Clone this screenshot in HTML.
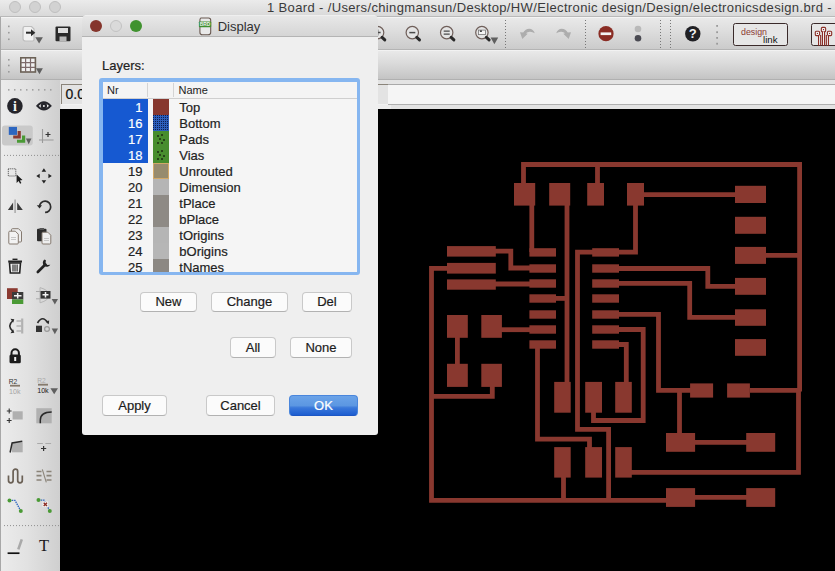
<!DOCTYPE html>
<html><head><meta charset="utf-8">
<style>
*{box-sizing:border-box;margin:0;padding:0}
html,body{width:835px;height:571px;overflow:hidden;background:#000;font-family:"Liberation Sans",sans-serif;}
#root{position:relative;width:835px;height:571px;overflow:hidden;background:#000}
.abs{position:absolute}
#titlebar{left:0;top:0;width:835px;height:17px;background:linear-gradient(#ebebeb,#d9d9d9);border-bottom:1px solid #b9b9b9}
#titletext{left:267px;top:-1px;letter-spacing:0.36px;font-size:13px;line-height:17px;color:#3a3a3a;white-space:nowrap;transform-origin:0 0}
.tl{position:absolute;width:12px;height:12px;border-radius:50%}
#tb1{left:0;top:17px;width:835px;height:33px;background:linear-gradient(#e9e9e9 0%,#dedede 40%,#cbcbcb 100%);border-top:1px solid #f4f4f4;border-bottom:1px solid #b4b4b4}
#tb2{left:0;top:50px;width:835px;height:30px;background:linear-gradient(#e9e9e9 0%,#dadada 45%,#c4c4c4 100%);border-top:1px solid #f2f2f2;border-bottom:1px solid #b0b0b0}
#row3{left:0;top:80px;width:835px;height:29px;background:#e3e3e3}
#coord{left:61px;top:84px;width:330px;height:19.500px;background:#e3e3e3;border-top:1px solid #8a847a;border-left:1px solid #8a847a;box-shadow:0 1px 0 #f2f2f2,0 5px 0 #ededed;font-size:14px;line-height:18.400px;padding-left:3.500px;color:#111;-webkit-text-stroke:0.2px #111}
#cmd{left:388px;top:84px;width:447px;height:21px;background:#f5f5f5;border-top:1px solid #a9a9a9;border-bottom:1px solid #b0b0b0}
#left{left:0;top:80px;width:60px;height:491px;background:linear-gradient(90deg,#ececec 0%,#e2e2e2 45%,#cfcfcf 100%)}
#leftedge{left:0;top:17px;width:1px;height:554px;background:#a8a8a8}
.pcb{position:absolute;left:0;top:0}
.icons{position:absolute;left:0;top:0}
/* dialog */
#dlg{left:82px;top:15px;width:296px;height:420px;background:#efefef;border-radius:5px 5px 3px 3px;overflow:hidden}
#dlgtitle{left:0;top:0;width:296px;height:22px;background:linear-gradient(#f3f3f3 0,#e7e7e7 1.500px,#d5d5d5 100%);border-bottom:1px solid #b4b4b4}
#dlgtitle span{position:absolute;left:135.7px;top:3.8px;font-size:13px;line-height:16px;color:#303030}
#lbl{left:20px;top:43px;font-size:13px;line-height:16px;color:#222}
#listring{left:17px;top:63px;width:261px;height:197px;background:#86b6f0;border-radius:3px}
#list{left:3.5px;top:3.5px;width:254px;height:190px;background:#f5f5f5;overflow:hidden}
#lhead{left:0;top:0;width:254px;height:17px;background:#f4f4f4;border-bottom:1px solid #cfcfcf;font-size:11px;line-height:15px;color:#222}
#lhead i{position:absolute;top:1px;width:1px;height:14px;background:#d4d4d4}
.row{position:absolute;left:0;width:254px;height:16px;font-size:13px;line-height:17.4px;color:#222}
.row .nr{position:absolute;left:0;top:0;width:45px;height:16px;text-align:right;padding-right:5px}
.row.sel .nr{background:#1659d1;color:#fff}
.row .sw{position:absolute;left:50px;top:0;width:16px;height:16px}
.row .nm{position:absolute;left:76.8px;top:0}
.row,.btn,#lbl{-webkit-text-stroke:0.2px currentColor}
.btn{position:absolute;height:20px;background:#fbfbfb;border:1px solid #c9c9c9;border-bottom-color:#b2b2b2;border-radius:4px;font-size:13px;line-height:18px;text-align:center;color:#1c1c1c}
.btn.ok{background:linear-gradient(#6ba3e8 0%,#5c97e2 50%,#3a78da 62%,#1d5dd0 100%);border-color:#4a86dc;border-bottom-color:#1c56c4;color:#fff}
</style></head><body><div id="root">
<div id="titlebar" class="abs"></div>
<div class="tl" style="left:9px;top:1px;background:#d2d2d2;border:1px solid #bfbfbf"></div>
<div class="tl" style="left:29px;top:1px;background:#d2d2d2;border:1px solid #bfbfbf"></div>
<div class="tl" style="left:49px;top:1px;background:#d2d2d2;border:1px solid #bfbfbf"></div>
<div id="titletext" class="abs">1 Board - /Users/chingmansun/Desktop/HW/Electronic design/Design/electronicsdesign.brd -</div>
<div id="tb1" class="abs"></div>
<div id="tb2" class="abs"></div>
<div id="row3" class="abs"></div>
<div id="left" class="abs"></div>
<div id="leftedge" class="abs"></div>
<div id="coord" class="abs">0.05 inch</div>
<div id="cmd" class="abs"></div>
<div class="abs" style="left:60px;top:109px;width:775px;height:462px;background:#000"></div>
<svg class="pcb" width="835" height="571" viewBox="0 0 835 571"><g fill="#89382f"><rect x="514.0" y="183.0" width="21.2" height="22.6"/><rect x="549.2" y="183.0" width="21.0" height="22.6"/><rect x="587.2" y="183.0" width="16.8" height="22.6"/><rect x="627.0" y="183.0" width="17.0" height="22.6"/><rect x="735.0" y="185.8" width="31.0" height="17.2"/><rect x="735.0" y="216.8" width="31.0" height="17.0"/><rect x="735.0" y="246.9" width="31.0" height="17.0"/><rect x="735.0" y="277.9" width="31.0" height="16.9"/><rect x="735.0" y="309.3" width="31.0" height="16.5"/><rect x="735.0" y="339.1" width="31.0" height="16.7"/><rect x="447.0" y="246.1" width="48.8" height="10.5"/><rect x="447.0" y="262.9" width="48.8" height="10.7"/><rect x="447.0" y="279.4" width="48.8" height="10.3"/><rect x="529.4" y="248.2" width="26.6" height="8.4"/><rect x="592.2" y="248.2" width="26.8" height="8.4"/><rect x="529.4" y="264.3" width="26.6" height="8.4"/><rect x="592.2" y="264.3" width="26.8" height="8.4"/><rect x="529.4" y="279.3" width="26.6" height="8.4"/><rect x="592.2" y="279.3" width="26.8" height="8.4"/><rect x="529.4" y="294.3" width="26.6" height="8.4"/><rect x="592.2" y="294.3" width="26.8" height="8.4"/><rect x="529.4" y="310.3" width="26.6" height="8.4"/><rect x="592.2" y="310.3" width="26.8" height="8.4"/><rect x="529.4" y="325.3" width="26.6" height="8.4"/><rect x="592.2" y="325.3" width="26.8" height="8.4"/><rect x="529.4" y="340.3" width="26.6" height="8.4"/><rect x="592.2" y="340.3" width="26.8" height="8.4"/><rect x="447.0" y="315.0" width="20.8" height="22.8"/><rect x="447.0" y="363.8" width="20.8" height="23.1"/><rect x="481.3" y="315.0" width="20.6" height="22.8"/><rect x="481.3" y="363.8" width="20.6" height="23.1"/><rect x="554.2" y="381.9" width="16.5" height="30.8"/><rect x="554.2" y="447.1" width="16.5" height="30.5"/><rect x="585.2" y="381.9" width="16.8" height="30.8"/><rect x="585.2" y="447.1" width="16.8" height="30.5"/><rect x="615.2" y="381.9" width="16.6" height="30.8"/><rect x="615.2" y="447.1" width="16.6" height="30.5"/><rect x="690.1" y="383.4" width="23.0" height="14.2"/><rect x="727.1" y="383.4" width="22.8" height="14.2"/><rect x="666.0" y="433.0" width="29.1" height="18.8"/><rect x="666.0" y="488.1" width="29.1" height="18.8"/><rect x="746.2" y="433.0" width="29.0" height="18.8"/><rect x="746.2" y="488.1" width="29.0" height="18.8"/></g><g fill="none" stroke="#89382f" stroke-width="4.8" stroke-linejoin="miter" stroke-linecap="butt"><path d="M523.5 184 V164.5 H799.6 V391.5"/><path d="M798.5 389 V472.4 H631"/><path d="M597.5 164.5 V184"/><path d="M766 255.3 H799.6"/><path d="M750 390.3 H798.5"/><path d="M531.8 205 V252"/><path d="M567 205 V383"/><path d="M556 298.4 H567"/><path d="M644 194.6 H735"/><path d="M635.5 205 V252.1 H619"/><path d="M593 252.1 H577.5 V429.4 H608.6 V500"/><path d="M619 268.5 H707.8 V286.3 H735"/><path d="M619 283.3 H689.7 V317.3 H735"/><path d="M619 314.3 H658.5 V390.3 H691"/><path d="M679.5 390.3 V434"/><path d="M619 329.5 H643.2 V420.5 H593.5 V412"/><path d="M619 344.5 H626.3 V383"/><path d="M495 251.2 H510.8 V268 H530"/><path d="M448 268.4 H431.5 V500.3 H667"/><path d="M495 284 H530"/><path d="M457.4 337 V365"/><path d="M501 329.7 H530"/><path d="M492.3 386 V396.3 H431.5"/><path d="M537.5 348 V439.2 H589.5 V448"/><path d="M563.5 477 V500.3"/><path d="M695 442.3 H747"/><path d="M695 497.3 H747"/></g></svg>
<svg class="icons" width="835" height="571" viewBox="0 0 835 571"><rect x="8.0" y="25.6" width="1.6" height="1.6" fill="#9b9b9b"/><rect x="8.0" y="31.9" width="1.6" height="1.6" fill="#9b9b9b"/><rect x="8.0" y="38.5" width="1.6" height="1.6" fill="#9b9b9b"/><path d="M24.5 26.5h7l2.5 2.5v10.5q0 1.5-1.5 1.5h-7q-2.5 0-2.5-2.5v-9.5q0-2.5 1.5-2.5z" fill="#f1f1f1" stroke="#bdbdbd" stroke-width="1.2"/><path d="M26 32.7h6" stroke="#2a2a2a" stroke-width="2" fill="none"/><path d="M31 29.2l4.3 3.5-4.3 3.5z" fill="#2a2a2a"/><path d="M35.3 37.3H42.9L39.099999999999994 43.6Z" fill="#5f5f5f"/><path d="M56.5 26.5h13q1 0 1 1v12.8q0 1-1 1h-13q-1 0-1-1v-12.8q0-1 1-1z" fill="#2a2a2a"/><rect x="58" y="28" width="10" height="5" fill="#dedede"/><rect x="59.5" y="36.5" width="7" height="4.8" fill="#b9b9b9"/><circle cx="377.6" cy="32.6" r="6.2" fill="#e4e4e4" stroke="#6f5f5a" stroke-width="1.2"/><path d="M382.1 37.300000000000004l2.7 2.6" stroke="#2a2a2a" stroke-width="3" stroke-linecap="round"/><path d="M374.6 32.6h6M377.6 29.6v6" stroke="#4a4a4a" stroke-width="1.5"/><circle cx="412.3" cy="32.6" r="6.2" fill="#e4e4e4" stroke="#6f5f5a" stroke-width="1.2"/><path d="M416.8 37.300000000000004l2.7 2.6" stroke="#2a2a2a" stroke-width="3" stroke-linecap="round"/><path d="M409.3 32.6h6" stroke="#4a4a4a" stroke-width="1.5"/><circle cx="446.7" cy="32.6" r="6.2" fill="#e4e4e4" stroke="#6f5f5a" stroke-width="1.2"/><path d="M451.2 37.300000000000004l2.7 2.6" stroke="#2a2a2a" stroke-width="3" stroke-linecap="round"/><path d="M443.7 31.1h6M443.7 34.1h6" stroke="#4a4a4a" stroke-width="1.4"/><circle cx="481.9" cy="32.6" r="6.2" fill="#e4e4e4" stroke="#6f5f5a" stroke-width="1.2"/><path d="M486.4 37.300000000000004l2.7 2.6" stroke="#2a2a2a" stroke-width="3" stroke-linecap="round"/><rect x="478.4" y="30.1" width="7" height="4.5" fill="#f4f4f4" stroke="#777" stroke-width="0.8"/><rect x="479.9" y="30.400000000000002" width="2" height="1.5" fill="#333"/><path d="M490.6 37.5H498.2L494.4 44.2Z" fill="#5f5f5f"/><path d="M505.5 20V48.5" stroke="#777" stroke-width="1" stroke-dasharray="1 2" fill="none"/><path d="M534.8 33.2q-1.600-4.200-5.600-4.400q-3.800 0-6 3.800l-3.200-.4 2.300 6.700 5.400-5.200-1.800-.5q1.800-1.700 4.200-1.500q2.400.2 4.700 1.500z" fill="#adadad"/><path d="M534.8 33.2q-1.600-4.200-5.600-4.400q-3.800 0-6 3.800l-3.200-.4 2.300 6.700 5.400-5.200-1.800-.5q1.800-1.700 4.200-1.500q2.400.2 4.700 1.500z" fill="#adadad" transform="translate(1091 0) scale(-1 1)"/><path d="M585.5 20V48.5" stroke="#777" stroke-width="1" stroke-dasharray="1 2" fill="none"/><circle cx="606" cy="33.7" r="7.6" fill="#8a2d24"/><rect x="600.6" y="32.4" width="10.6" height="2.7" fill="#f4f4f4"/><circle cx="638" cy="29" r="3.3" fill="#b9b9b9"/><circle cx="638" cy="38.3" r="3.3" fill="#4a4a52"/><path d="M660.5 20V48.5" stroke="#777" stroke-width="1" stroke-dasharray="1 2" fill="none"/><path d="M670.5 20V48.5" stroke="#777" stroke-width="1" stroke-dasharray="1 2" fill="none"/><circle cx="692.8" cy="33.7" r="7.7" fill="#202024"/><text x="692.8" y="38.4" font-family="Liberation Sans" font-weight="bold" font-size="13" text-anchor="middle" fill="#f2f2f2">?</text><rect x="716.2" y="25.0" width="1.8" height="1.8" fill="#9a9a9a"/><rect x="716.2" y="31.3" width="1.8" height="1.8" fill="#9a9a9a"/><rect x="716.2" y="37.0" width="1.8" height="1.8" fill="#9a9a9a"/><rect x="716.2" y="42.8" width="1.8" height="1.8" fill="#9a9a9a"/><rect x="733.5" y="23.5" width="54" height="22" rx="2" fill="#e6e6e6" stroke="#3a2a2a" stroke-width="1"/><text x="741" y="35" font-family="Liberation Sans" font-size="9.5" fill="#8b3a31" textLength="26" lengthAdjust="spacingAndGlyphs">design</text><text x="763" y="42.6" font-family="Liberation Sans" font-size="9.5" fill="#111" textLength="14.5" lengthAdjust="spacingAndGlyphs">link</text><rect x="811.5" y="23.5" width="40" height="22" rx="2" fill="#e6e6e6" stroke="#3a2a2a" stroke-width="1"/><g stroke="#8b2e26" stroke-width="3.200" fill="none"><path d="M819.600 45.500V35M823.500 45.500V31M827.400 45.500V35"/></g><g fill="#f1f1f1" stroke="#8b2e26" stroke-width="1.100"><rect x="815.300" y="31.300" width="4.300" height="4.300" rx="1"/><rect x="821.350" y="27.400" width="4.300" height="4.300" rx="1"/><rect x="827.400" y="31.300" width="4.300" height="4.300" rx="1"/></g><g stroke="#f1f1f1" stroke-width="1" fill="none"><path d="M819.600 45V35.500M823.500 45V31.500M827.400 45V35.500"/></g><g fill="#8b2e26"><rect x="816.900" y="32.900" width="1.100" height="1.100"/><rect x="822.950" y="29" width="1.100" height="1.100"/><rect x="829" y="32.900" width="1.100" height="1.100"/></g><rect x="8.0" y="59.0" width="1.6" height="1.6" fill="#9b9b9b"/><rect x="8.0" y="64.7" width="1.6" height="1.6" fill="#9b9b9b"/><rect x="8.0" y="71.0" width="1.6" height="1.6" fill="#9b9b9b"/><rect x="20.8" y="57.8" width="14.6" height="14.2" fill="#f0f0f0" stroke="#6b6156" stroke-width="1.6"/><path d="M25.6 58v14M30.5 58v14M21 62.6h14M21 67.3h14" stroke="#7d6a6a" stroke-width="1.2" fill="none"/><path d="M36 68.2H42.9L39.45 74.3Z" fill="#5f5f5f"/><path d="M8 89.8H53" stroke="#8f8f8f" stroke-width="1.3" stroke-dasharray="1.5 4.5" fill="none"/><circle cx="14.9" cy="105.9" r="7.8" fill="#25252b"/><text x="14.9" y="111" font-family="Liberation Serif" font-weight="bold" font-size="14" text-anchor="middle" fill="#f4f4f4">i</text><path d="M37.300 105.900q6.600-7.400 13.200 0q-6.600 7.400-13.200 0z" fill="#f0f0f0" stroke="#25252b" stroke-width="2"/><circle cx="43.9" cy="105.9" r="3.2" fill="#25252b"/><circle cx="43.9" cy="105.9" r="1" fill="#eee"/><rect x="2" y="125.4" width="30.8" height="20.2" rx="3" fill="#c9c9c9"/><rect x="8.8" y="126.9" width="8.2" height="8" fill="#2d66c0"/><path d="M17.6 131v4.4h-4.4v3.2h7.6v-7.600z" fill="#8b3a31"/><path d="M22 135.500v4.2h-5v3.100h8.200v-7.300z" fill="#4a9a35"/><path d="M25.9 138.6H31.5L28.7 144.3Z" fill="#5f5f5f"/><path d="M42.500 129v14M39 140h14.600" stroke="#9a9a9a" stroke-width="1.1" fill="none"/><path d="M45.500 134.500h5M48 132v5" stroke="#333" stroke-width="1.200" fill="none"/><path d="M4 155.4H59" stroke="#8f8f8f" stroke-width="1" stroke-dasharray="1 2" fill="none"/><rect x="8.300" y="168.800" width="7.500" height="7.200" fill="none" stroke="#444" stroke-width="1" stroke-dasharray="1 1"/><path d="M16.600 174.600v8.300l2-1.800 1.500 2.600 1.300-.7-1.500-2.600 2.600-.3z" fill="#1c1c1c"/><path d="M43.900 168.300l2.300 3.400h-4.600zM43.900 183.600l2.300-3.400h-4.600zM36.300 176l3.400-2.300v4.600zM51.800 176l-3.400-2.300v4.600z" fill="#222"/><path d="M15.100 199.500v13.500" stroke="#a8a8a8" stroke-width="1.500"/><path d="M13.100 202.500v7.500h-5.200zM17.200 202.500v7.500h5.600z" fill="#3a3a3a"/><path d="M39.500 206.500a5.600 5.600 0 1 1 5.600 5.900" fill="none" stroke="#2c2c2c" stroke-width="1.700"/><path d="M36.800 205.200h5.200l-2.400 3.400z" fill="#2c2c2c"/><path d="M12.500 228.700h6l3 3v9.300q0 1-1 1h-8q-1 0-1-1v-11.300q0-1 1-1z" fill="#ededed" stroke="#857a70" stroke-width="1"/><path d="M9.800 231.200h5.500l3 3v8.800q0 1-1 1h-7.500q-1 0-1-1v-10.800q0-1 1-1z" fill="#f3f3f3" stroke="#857a70" stroke-width="1"/><path d="M11 237.500h5M11 239.500h5" stroke="#bbb" stroke-width=".8"/><rect x="37" y="228.800" width="9.500" height="12.400" rx="1" fill="#2b2b2b"/><rect x="39.500" y="228" width="4.500" height="2" fill="#555"/><path d="M43 232.200h4.800l3 3v7.800q0 1-1 1h-6.800q-1 0-1-1v-9.800q0-1 1-1z" fill="#eee" stroke="#857a70" stroke-width="1"/><path d="M44 238.500h5M44 240.500h5" stroke="#bbb" stroke-width=".8"/><path d="M8.200 261.500h13.800" stroke="#222" stroke-width="2"/><path d="M12.500 259.300h5" stroke="#222" stroke-width="1.400"/><path d="M9.500 263h11l-.8 10h-9.400z" fill="#f0f0f0" stroke="#222" stroke-width="1.600"/><path d="M13 264.500v7M15 264.500v7M17.100 264.500v7" stroke="#222" stroke-width="1.100"/><path d="M37.800 272l7.500-7.500" stroke="#222" stroke-width="2.600" stroke-linecap="round"/><path d="M44.500 259.500a4 4 0 1 0 5.800 5.200l-2.900.3-1.800-1.800.300-2.900z" fill="#222"/><rect x="7" y="288.200" width="10.700" height="10.800" fill="#8b3a31"/><rect x="12" y="292" width="11.300" height="7.500" fill="#3a3a3a"/><rect x="12" y="299.500" width="11.300" height="4.500" fill="#4a9a35"/><path d="M14 295.700h7.500M17.700 293v5.500" stroke="#f2f2f2" stroke-width="1.500"/><path d="M40 287.600q9 2.500 9 7.600t-9 7.600z" fill="none" stroke="#b5b5b5" stroke-width="1"/><path d="M36 291.500h4M36 298.800h4" stroke="#aaa" stroke-width="1"/><rect x="40.500" y="291" width="10" height="7.600" fill="#333"/><path d="M42.500 294.800h6M45.500 292v5.600" stroke="#f2f2f2" stroke-width="1.500"/><path d="M51.7 299H58L54.85 304.6Z" fill="#5f5f5f"/><path d="M13 320.500q-6.500 5.500 0 11" fill="none" stroke="#2c2c2c" stroke-width="1.600"/><path d="M10.500 318.800l3.800.4-1.200 3.600zM10.500 333.200l3.800-.4-1.200-3.600z" fill="#2c2c2c"/><path d="M22.200 318.500v15" stroke="#b1b1b1" stroke-width="2.200"/><path d="M16.500 321h4.600M16.500 326h4.600M16.500 331h4.600" stroke="#999" stroke-width="1"/><path d="M37.500 323q5-8.500 10.500 0" fill="none" stroke="#2c2c2c" stroke-width="1.600"/><path d="M45.500 321.500l3.700-1-.4 3.800z" fill="#2c2c2c"/><rect x="36" y="325.700" width="6" height="6.300" fill="#333"/><circle cx="47" cy="329" r="2.400" fill="none" stroke="#9a9a9a" stroke-width="1.200"/><path d="M51.7 328.5H58L54.85 334.2Z" fill="#5f5f5f"/><path d="M11.500 355.500v-2.500a3.700 3.700 0 0 1 7.400 0v2.500" fill="none" stroke="#1c1c1c" stroke-width="2"/><rect x="9.500" y="354.500" width="11.300" height="8.800" rx="1.500" fill="#1c1c1c"/><path d="M15.200 357v4" stroke="#f0f0f0" stroke-width="2"/><text x="8.800" y="383.800" font-family="Liberation Sans" font-size="7.500" fill="#333" textLength="8.500" lengthAdjust="spacingAndGlyphs">R2</text><rect x="10" y="384.800" width="10" height="1.800" fill="#857a6c"/><text x="9" y="393.800" font-family="Liberation Sans" font-size="7.500" fill="#a5a5a5" textLength="11.500" lengthAdjust="spacingAndGlyphs">10k</text><text x="37.200" y="382.800" font-family="Liberation Sans" font-size="7.500" fill="#aaa" textLength="8.500" lengthAdjust="spacingAndGlyphs">R2</text><rect x="38" y="383.800" width="10" height="1.800" fill="#857a6c"/><text x="37.200" y="393.300" font-family="Liberation Sans" font-size="7.500" fill="#222" textLength="11.500" lengthAdjust="spacingAndGlyphs">10k</text><path d="M50.4 388.2H58L54.2 394.2Z" fill="#5f5f5f"/><rect x="12.600" y="411.300" width="10.100" height="8.200" fill="#b0b0b0"/><path d="M9.200 408.500v5M6.800 411h4.800M9.200 418v5M6.800 420.500h4.800" stroke="#333" stroke-width="1.100"/><rect x="36.300" y="408.200" width="15.400" height="15.100" fill="#b1b1b1"/><path d="M40.300 423.300v-3q0-8.300 11.400-8.300" fill="none" stroke="#2a2a2a" stroke-width="1.500"/><rect x="12" y="442.200" width="10.700" height="10.100" fill="#b0b0b0"/><path d="M10.100 452.500l2-9.500 10.200-1.800" fill="none" stroke="#2a2a2a" stroke-width="1.500"/><path d="M37.200 443.500h5.700M45.400 443.500h5.700" stroke="#aaa" stroke-width="1.200"/><path d="M43.600 446v5M41 448.500h5.200" stroke="#333" stroke-width="1.200"/><path d="M8.500 475.500v5a2.300 2.300 0 0 0 4.600 0v-9a2.300 2.300 0 0 1 4.600 0v9a2.300 2.300 0 0 0 4.600 0v-5" fill="none" stroke="#6b6156" stroke-width="1.700"/><path d="M36.500 471.500h5M36.500 475.700h5M36.500 480h5M46.500 471.500h5M46.500 475.700h5M46.500 480h5" stroke="#8a8378" stroke-width="1.700"/><path d="M42.300 469.300l4 13" stroke="#8a8378" stroke-width="1.100"/><path d="M9.500 500.400h5.500l5.800 10.600" fill="none" stroke="#2d66c0" stroke-width="1.300" stroke-dasharray="1.5 .8"/><circle cx="9.500" cy="500.400" r="2" fill="#4a9a35"/><circle cx="20.800" cy="511" r="2" fill="#4a9a35"/><path d="M38.500 500.100h5.500l5.800 10.900" fill="none" stroke="#2d66c0" stroke-width="1.300" stroke-dasharray="1.5 .8"/><circle cx="38.500" cy="500.100" r="2" fill="#4a9a35"/><circle cx="49.800" cy="511" r="2" fill="#4a9a35"/><rect x="42.500" y="501.500" width="5.600" height="5.600" fill="#f2f2f2"/><path d="M43.700 502.700l3.300 3.300M47 502.700l-3.300 3.300" stroke="#8b2b22" stroke-width="1.300"/><path d="M4 525.6H59" stroke="#8f8f8f" stroke-width="1" stroke-dasharray="1 2" fill="none"/><path d="M7.600 553.200h11.900" stroke="#111" stroke-width="1.700"/><path d="M18.300 549.400l3.500-10" stroke="#a9a9a9" stroke-width="2.600"/><text x="44.100" y="551.300" font-family="Liberation Serif" font-size="16.500" text-anchor="middle" fill="#1a1a1a">T</text></svg>
<div id="dlg" class="abs">
 <div id="dlgtitle" class="abs"><span>Display</span>
 <svg class="abs" style="left:115px;top:1px" width="18" height="20" viewBox="0 0 18 20"><path d="M4 2h7.500q2.200 0 2.200 2.200v12q0 2.600-2.600 2.600h-5.600q-2.600 0-2.600-2.600v-11.200q0-3 1.100-3z" fill="#e9e9e9" stroke="#6a5a52" stroke-width="1.100"/><rect x="1.900" y="5.400" width="12.300" height="5.900" rx=".8" fill="#3f9030"/><text x="8" y="10.100" font-family="Liberation Sans" font-weight="bold" font-size="4.800" text-anchor="middle" fill="#f4f4f4">BRD</text></svg></div>
 <div class="tl" style="left:8px;top:5px;background:#85352c"></div>
 <div class="tl" style="left:28px;top:5px;background:#dadada;border:1px solid #c2c2c2"></div>
 <div class="tl" style="left:48px;top:5px;background:#40922f"></div>
 <div id="lbl" class="abs">Layers:</div>
 <div id="listring" class="abs"><div id="list" class="abs">
  <div id="lhead" class="abs"><span class="abs" style="left:4.5px;top:1px">Nr</span><i style="left:44.5px"></i><i style="left:70.5px"></i><span class="abs" style="left:76px;top:1px">Name</span></div>
  <div class="row sel" style="top:17px"><div class="nr">1</div><div class="sw" style="background:#87372e"></div><div class="nm">Top</div></div>
<div class="row sel" style="top:33px"><div class="nr">16</div><svg class="sw" width="16" height="16" viewBox="0 0 16 16"><defs><pattern id="pb" width="2" height="2" patternUnits="userSpaceOnUse"><rect width="2" height="2" fill="#2c5ebc"/><rect x="0" y="0" width="1" height="1" fill="#0e1f4e"/></pattern></defs><rect width="16" height="16" fill="url(#pb)"/></svg><div class="nm">Bottom</div></div>
<div class="row sel" style="top:49px"><div class="nr">17</div><div class="sw" style="background:#488d2e;background-image:radial-gradient(circle at 5px 5px,#1a2a10 .6px,transparent 1px),radial-gradient(circle at 9px 4px,#1a2a10 .6px,transparent 1px),radial-gradient(circle at 7px 8px,#1a2a10 .6px,transparent 1px),radial-gradient(circle at 11px 9px,#1a2a10 .6px,transparent 1px),radial-gradient(circle at 5px 12px,#1a2a10 .6px,transparent 1px),radial-gradient(circle at 9px 12px,#1a2a10 .6px,transparent 1px)"></div><div class="nm">Pads</div></div>
<div class="row sel" style="top:65px"><div class="nr">18</div><div class="sw" style="background:#488d2e;background-image:radial-gradient(circle at 5px 5px,#1a2a10 .6px,transparent 1px),radial-gradient(circle at 9px 4px,#1a2a10 .6px,transparent 1px),radial-gradient(circle at 7px 8px,#1a2a10 .6px,transparent 1px),radial-gradient(circle at 11px 9px,#1a2a10 .6px,transparent 1px),radial-gradient(circle at 5px 12px,#1a2a10 .6px,transparent 1px),radial-gradient(circle at 9px 12px,#1a2a10 .6px,transparent 1px)"></div><div class="nm">Vias</div></div>
<div class="row" style="top:81px"><div class="nr">19</div><div class="sw" style="background:#978b6e;box-shadow:inset 0 0 0 1px #d2a868"></div><div class="nm">Unrouted</div></div>
<div class="row" style="top:97px"><div class="nr">20</div><div class="sw" style="background:#b5b5b5"></div><div class="nm">Dimension</div></div>
<div class="row" style="top:113px"><div class="nr">21</div><div class="sw" style="background:#8e8a85"></div><div class="nm">tPlace</div></div>
<div class="row" style="top:129px"><div class="nr">22</div><div class="sw" style="background:#8e8a85"></div><div class="nm">bPlace</div></div>
<div class="row" style="top:145px"><div class="nr">23</div><div class="sw" style="background:#b5b5b5"></div><div class="nm">tOrigins</div></div>
<div class="row" style="top:161px"><div class="nr">24</div><div class="sw" style="background:#b6b6b6"></div><div class="nm">bOrigins</div></div>
<div class="row" style="top:177px"><div class="nr">25</div><div class="sw" style="background:#8c8883"></div><div class="nm">tNames</div></div>

 </div></div>
 <div class="btn" style="left:58px;top:277px;width:57px">New</div>
 <div class="btn" style="left:129px;top:277px;width:77px">Change</div>
 <div class="btn" style="left:220px;top:277px;width:50px">Del</div>
 <div class="btn" style="left:148px;top:322px;width:46px;height:20.5px;line-height:19px">All</div>
 <div class="btn" style="left:208px;top:322px;width:62px;height:20.5px;line-height:19px">None</div>
 <div class="btn" style="left:20px;top:380px;width:65px;height:21px;line-height:19.6px">Apply</div>
 <div class="btn" style="left:124px;top:380px;width:69px;height:21px;line-height:19.6px">Cancel</div>
 <div class="btn ok" style="left:207px;top:380px;width:69px;height:21px;line-height:19.6px">OK</div>
</div>
</div></body></html>
